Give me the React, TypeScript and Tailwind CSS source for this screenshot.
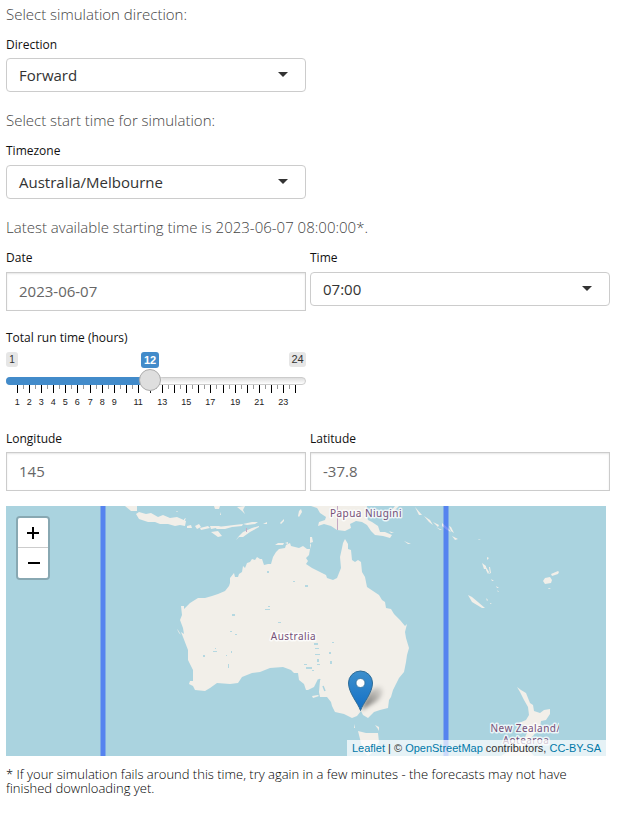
import React from 'react';

const FONT = "font-['Open_Sans','Noto_Sans',sans-serif]";

function Heading({ children, className = '' }: { children: React.ReactNode; className?: string }) {
  return (
    <h2 className={`flex h-[30px] items-center whitespace-nowrap pb-[2px] text-[15px] font-light text-[#444] ${className}`}>
      {children}
    </h2>
  );
}

function Label({ children, className = 'pt-0' }: { children: React.ReactNode; className?: string }) {
  return <label className={`flex h-7 items-center text-[12px] text-[#111] ${className}`}>{children}</label>;
}

function Select({ value }: { value: string }) {
  return (
    <div className="flex h-[34px] w-[300px] items-center justify-between rounded-[4px] border border-[#ccc] bg-white pl-3 pr-[17px] text-[15px] text-[#333]">
      <span>{value}</span>
      <span className="mb-[2px] h-0 w-0 border-x-[5px] border-t-[5px] border-x-transparent border-t-[#333]" />
    </div>
  );
}

function Field({ value }: { value: string }) {
  return (
    <div className="flex h-[39px] w-[300px] items-center border border-[#ccc] bg-white pl-3 text-[15px] text-[#666] shadow-[inset_0_1px_2px_rgba(0,0,0,0.1)]">
      {value}
    </div>
  );
}

const HOURS = Array.from({ length: 24 }, (_, i) => i + 1);
const STEP = 12.09;

function Scale() {
  return (
    <svg width="300" height="25" viewBox="0 0 300 25" className="block">
      {HOURS.map((h) => {
        const x = Math.round(11 + (h - 1) * STEP);
        const shown = h < 10 || h % 2 === 1;
        return (
          <g key={h}>
            <rect x={x} y="0" width="1" height="8" fill="#000" />
            {h < 24 && <rect x={Math.round(11 + (h - 0.5) * STEP)} y="0" width="1" height="4" fill="#999" />}
            {shown && (
              <text x={x + 0.2} y="20" textAnchor="middle" className="font-['Liberation_Sans',sans-serif] text-[9px]" fill="#222">
                {h}
              </text>
            )}
          </g>
        );
      })}
    </svg>
  );
}

function HourSlider() {
  return (
    <div className="w-[300px] font-['Liberation_Sans',sans-serif]">
      <div className="flex h-4 items-start text-[11px] leading-[15px] text-[#333]">
        <span className="h-[15px] w-3 rounded-[3px] bg-[#e6e6e6] text-center text-[10px]">1</span>
        <span className="ml-[123px] h-4 w-[18px] rounded-[3px] bg-[#428bca] text-center font-bold leading-4 text-white">12</span>
        <span className="ml-auto h-[15px] w-[17px] rounded-[3px] bg-[#e6e6e6] text-center">24</span>
      </div>
      <div className="relative mt-[9px] h-2 rounded-full border border-[#ccc] bg-gradient-to-b from-[#dedede] to-white">
        <div className="absolute -left-px -top-px h-2 w-36 rounded-l-full bg-[#428bca]" />
        <div className="absolute -top-[9px] left-[132px] z-10 h-[22px] w-[22px] rounded-full border border-[#ababab] bg-[#dedede] shadow-[1px_1px_3px_rgba(255,255,255,0.3)]" />
      </div>
      <Scale />
    </div>
  );
}

const AUSTRALIA =
  'M225 591L229 586L230 583L230 578L234 573L235 577L238 577L239 574L242 572L243 566L245 568L247 563L250 562L252 559L255 560L257 557L260 559L262 559L264 565L268 564L271 564L273 557L276 552L279 549L285 548L286 545L290 543L291 546L295 547L299 548L303 546L307 549L310 549L309 555L306 558L308 561L306 564L312 568L320 572L326 575L327 578L333 580L337 578L339 573L341 568L340 557L342 548L343 543L345 539L348 544L348 549L351 550L352 560L355 562L358 560L361 562L362 572L365 577L367 587L373 591L379 595L382 600L385 602L386 608L391 609L394 614L400 620L405 626L407 624L405 632L406 638L409 648L407 655L406 662L404 672L399 678L396 684L393 690L391 697L389 700L388 708L380 710L374 712L368 718L363 715L361 711L357 716L352 718L344 714L335 712L332 706L331 702L327 697L320 697L319 692L320 680L318 679L314 687L310 689L308 690L306 690L304 684L299 680L298 673L294 673L291 670L283 667L270 668L260 672L252 673L242 677L238 683L230 684L217 683L210 688L205 691L195 690L193 686L189 684L190 681L193 681L193 670L188 660L188 650L183 637L181 632L184 634L183 628L180 620L182 615L181 606L184 606L184 609L190 603L198 598L205 598L212 596L218 594Z';

const ISLANDS = [
  // Java, Bali and the Lesser Sundas
  'M125 506L131 511L137 511L137 506Z',
  'M136 514L139 512L146 514L151 513L158 517L163 515L170 518L177 517L186 521L185 526L180 525L175 526L168 524L160 524L155 522L148 522L139 519Z',
  'M187 526l4-1 1 3h-5zM195 526l4-2 2 3-4 2zM200 528l8-2 2 2-9 2zM210 526l8 0 3 1-10 2zM217 527l9-1 8-1 9-1-1 2-10 1-7 2-9 0z',
  'M211 532l7-1 4 5-4 1zM236 540l3-4 4-4 9-4 7-2 0 1-9 5-7 5-4 0z',
  'M243 524l9-2 6 0-3 2-8 1zM263 524l4-2v2zM280 523l4-4 0 2-3 3zM298 516l1-5 2-2 1 3-3 5zM311 506l9 0 0 3z',
  'M214 506l6 0-1 3-4 0zM220 512l1 3-1 0zM237 507l8-1-2 4 2 4-3-3zM184 519l2-1-2 4zM176 511l2 0-1 1z',
  // New Guinea
  'M316 506L320 513L326 517L325 520L319 522L318 526L324 524L331 526L337 530L345 531L351 528L350 524L356 521L362 522L367 525L371 531L375 535L383 536L390 538L392 535L385 532L380 532L378 526L372 522L368 520L366 513L367 506Z',
  'M310 549l1-4-1-2 3-1-1-5-2 0zM275 545l3-2 6 0-1 2zM285 543l3-1 0 2z',
  'M389 531l5 2-3 0zM404 541l7 3-3 0zM399 506l-5 5-3 0 4-5zM415 507l7 8-3 0zM424 516l6 4 3 5-4-3zM433 522l6 3-1 2zM436 527l6 3-2 0zM442 523l6 5 3 4-4-2-5-4zM449 526l2 1 3 6-3-2zM452 536l6 3-3 1z',
  // New Caledonia, Vanuatu and Fiji
  'M468 595l4 2 13 11-3 0-10-6z',
  'M482 563l4 3 0 3-2 0zM486 567l3 5-1 2-2-4zM488 574l2 0-1-7 1 0 1 6zM491 579l3 2-2 0zM496 586l3 2-2 0zM497 590l2 2-1 0zM486 598l2 2-1 1zM490 603l2 1-2 0zM478 539l3 1-2 0zM484 543l1 2zM487 557l2 1-2 2z',
  'M543 581l2-3 5-1 2 3-1 3-6 1zM551 574l7-3 1 1-1 2-6 2zM548 588l3 0-2 1z',
  // New Zealand
  'M517 687L521 690L526 693L528 698L530 703L533 705L534 711L540 713L544 710L550 709L550 714L546 720L541 721L540 727L533 736L526 742L523 741L527 733L525 726L519 723L526 720L529 715L528 707L524 700L520 692Z',
  'M510 741L517 744L511 750L501 756L534 756L525 746L520 740Z',
  // Tasmania, Kangaroo Island and Bass Strait
  'M358 731L366 733L378 733L379 742L373 752L368 756L363 751Z',
  'M354 724l1 4-1 0zM375 725l4 2 0 4-1-2zM312 696l6-1 1 1-6 2zM177 629l1 1 3 5-2-2z',
];

const LAKES =
  'M267 571h2v2h-2zM293 581h2v1h-2zM305 585h3v2h-3zM265 609h5v1h-5zM268 606h2v1h-2zM232 614h3v2h-3zM278 622h3v1h-3zM230 631h2v1h-2zM235 634h2v1h-2zM213 651h4v1h-4zM215 648h1v1h-1zM203 655h2v2h-2zM226 655h1v1h-1zM228 664h1v4h-1zM231 651h1v2h-1zM314 643h4v2h-4zM315 648h4v1h-4zM315 654h5v1h-5zM317 659h2v3h-2zM304 664h3v1h-3zM306 667h6v2h-6zM312 670h2v1h-2zM332 642h2v1h-2zM329 652h2v2h-2zM330 661h2v3h-2zM317 664h3v1h-3z';

function MapLabel({ x, y, children }: { x: number; y: number; children: string }) {
  return (
    <text
      x={x}
      y={y}
      textAnchor="middle"
      className="font-['Noto_Sans',sans-serif] text-[10px] tracking-[0.45px] [paint-order:stroke]"
      fill="#765078"
      stroke="rgba(255,255,255,0.75)"
      strokeWidth="3"
      strokeLinejoin="round"
    >
      {children}
    </text>
  );
}

function LeafletMap() {
  return (
    <div className="relative h-[250px] w-[600px] overflow-hidden bg-[#aad3df] font-['Liberation_Sans',sans-serif]">
      <svg width="600" height="250" viewBox="6 506 600 250" className="block">
        <defs>
          <linearGradient id="pin" x1="0" y1="0" x2="0" y2="1">
            <stop offset="0" stopColor="#3d8fcc" />
            <stop offset="1" stopColor="#126fc6" />
          </linearGradient>
          <linearGradient id="shade" x1="0" y1="1" x2="1" y2="0">
            <stop offset="0" stopColor="#000" stopOpacity="0.6" />
            <stop offset="1" stopColor="#000" stopOpacity="0.05" />
          </linearGradient>
          <filter id="soft" x="-40%" y="-40%" width="180%" height="180%">
            <feGaussianBlur stdDeviation="2" />
          </filter>
          <clipPath id="tile">
            <rect x="6" y="506" width="553" height="250" />
          </clipPath>
        </defs>
        <g fill="#f2efe9">
          <path d={AUSTRALIA} />
          {ISLANDS.map((d, i) => (
            <path key={i} d={d} />
          ))}
        </g>
        <path d={LAKES} fill="#aad3df" opacity="0.85" />
        <path d="M320 679L316 687M325 691l-2-5" stroke="#aad3df" strokeWidth="1.5" />
        <path d="M337.5 506v24M246.500 528v4" stroke="#c5a9c4" strokeWidth="1" />
        <MapLabel x={366} y={517}>Papua Niugini</MapLabel>
        <MapLabel x={293.500} y={639.5}>Australia</MapLabel>
        <g clipPath="url(#tile)">
          <MapLabel x={525.5} y={732}>New Zealand/</MapLabel>
          <MapLabel x={526} y={744}>Aotearoa</MapLabel>
        </g>
        <path d="M103 506v250M446 506v250" stroke="#0033ff" strokeOpacity="0.5" strokeWidth="5" />
        <path d="M361 710L367 696Q374 685 381 687Q386 692 377 701Z" fill="url(#shade)" filter="url(#soft)" />
        <path
          d="M360.500 710.500C358 703 348.500 693 348.500 683A12 12 0 0 1 372.500 683C372.500 693 363 703 360.500 710.500Z"
          fill="url(#pin)"
          stroke="#2e6c97"
          strokeWidth="1"
        />
        <circle cx="360.500" cy="683" r="4.500" fill="#fff" stroke="#2e6c97" strokeWidth="0.8" />
      </svg>
      <div className="absolute left-[10px] top-[10px] w-[34px] rounded-[4px] border-2 border-black/20 bg-clip-padding">
        <div className="flex h-[30px] items-center justify-center rounded-t-[2px] border-b border-[#ccc] bg-white">
          <svg width="12" height="12" viewBox="0 0 12 12">
            <path d="M6 0v12M0 6h12" stroke="#000" strokeWidth="2" />
          </svg>
        </div>
        <div className="flex h-[30px] items-center justify-center rounded-b-[2px] bg-white pl-px">
          <svg width="12" height="12" viewBox="0 0 12 12">
            <path d="M0 6h12" stroke="#000" strokeWidth="2" />
          </svg>
        </div>
      </div>
      <div className="absolute bottom-0 right-0 h-4 whitespace-nowrap bg-white/70 px-[5px] text-[11px] leading-4 text-[#333]">
        <span className="text-[#0078a8]">Leaflet</span> | © <span className="text-[#0078a8]">OpenStreetMap</span> contributors,{' '}
        <span className="text-[#0078a8]">CC-BY-SA</span>
      </div>
    </div>
  );
}

export default function App() {
  return (
    <main className={`h-[817px] w-[625px] overflow-hidden bg-white pl-1.5 ${FONT}`}>
      <Heading>Select simulation direction:</Heading>
      <Label className="pt-[2px]">Direction</Label>
      <Select value="Forward" />

      <Heading className="mt-[14px]">Select start time for simulation:</Heading>
      <Label className="mt-px">Timezone</Label>
      <Select value="Australia/Melbourne" />

      <Heading className="mt-[14px]">Latest available starting time is 2023-06-07 08:00:00*.</Heading>
      <div className="mt-px flex gap-1">
        <div>
          <Label>Date</Label>
          <Field value="2023-06-07" />
        </div>
        <div>
          <Label>Time</Label>
          <Select value="07:00" />
        </div>
      </div>

      <Label className="mt-[13px]">Total run time (hours)</Label>
      <HourSlider />

      <div className="mt-[14px] flex gap-1">
        <div>
          <Label className="pt-[2px]">Longitude</Label>
          <Field value="145" />
        </div>
        <div>
          <Label className="pt-[2px]">Latitude</Label>
          <Field value="-37.8" />
        </div>
      </div>

      <div className="mt-[15px]">
        <LeafletMap />
      </div>
      <p className="mt-[11px] w-[590px] text-[13px] font-light leading-[14px] text-black">
        * If your simulation fails around this time, try again in a few minutes - the forecasts may not have finished
        downloading yet.
      </p>
    </main>
  );
}
